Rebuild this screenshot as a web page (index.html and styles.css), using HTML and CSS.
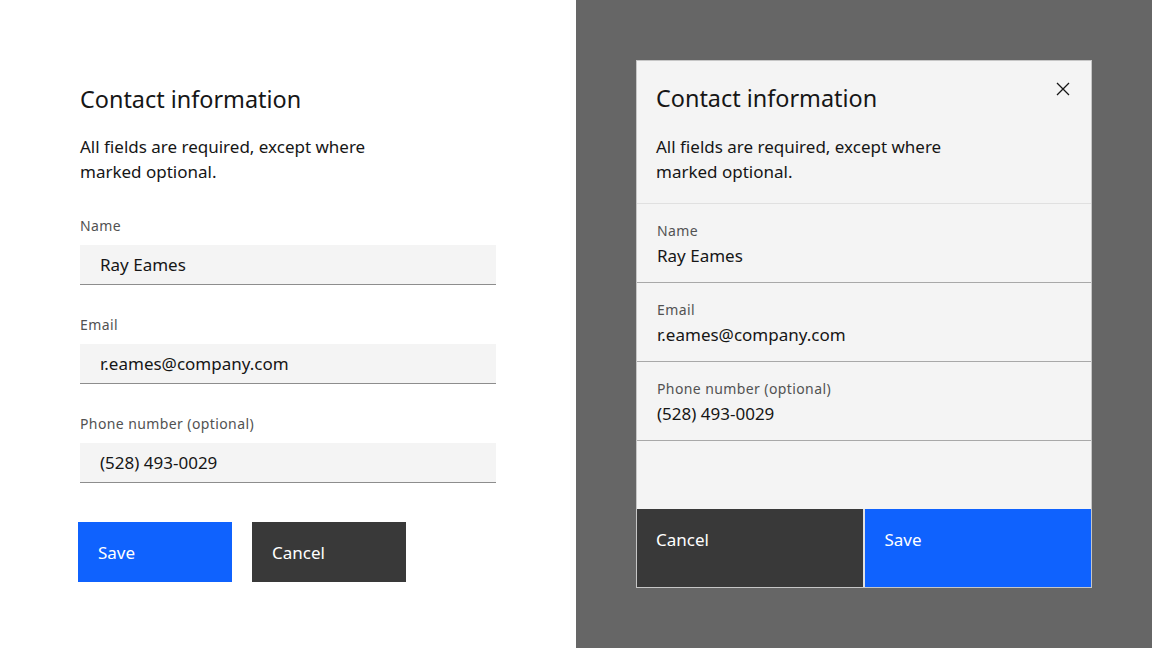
FILE: index.html
```html
<!DOCTYPE html>
<html>
<head>
  <title>Contact information</title>
  <link rel="stylesheet" href="styles.css">
</head>
<body>
  <div class="page">
    <div class="panel panel-light">
      <form class="form">
        <div class="heading">Contact information</div>
        <p class="description">All fields are required, except where<br>marked optional.</p>
        <div class="field">
          <label class="label">Name</label>
          <div class="input">Ray Eames</div>
        </div>
        <div class="field">
          <label class="label">Email</label>
          <div class="input">r.eames@company.com</div>
        </div>
        <div class="field">
          <label class="label">Phone number (optional)</label>
          <div class="input">(528) 493-0029</div>
        </div>
        <div class="actions">
          <button type="button" class="btn btn-primary">Save</button>
          <button type="button" class="btn btn-secondary">Cancel</button>
        </div>
      </form>
    </div>
    <div class="panel panel-dark">
      <div class="modal">
        <div class="modal-header">
          <div class="heading">Contact information</div>
          <p class="description">All fields are required, except where<br>marked optional.</p>
          <button type="button" class="close" aria-label="Close">
            <svg width="14" height="14" viewBox="0 0 14 14">
              <path d="M1 1 L13 13 M13 1 L1 13" stroke="#161616" stroke-width="1.3" fill="none"/>
            </svg>
          </button>
        </div>
        <div class="modal-field">
          <div class="label">Name</div>
          <div class="value">Ray Eames</div>
        </div>
        <div class="modal-field">
          <div class="label">Email</div>
          <div class="value">r.eames@company.com</div>
        </div>
        <div class="modal-field">
          <div class="label">Phone number (optional)</div>
          <div class="value">(528) 493-0029</div>
        </div>
        <div class="modal-spacer"></div>
        <div class="modal-footer">
          <button type="button" class="btn btn-secondary">Cancel</button>
          <button type="button" class="btn btn-primary">Save</button>
        </div>
      </div>
    </div>
  </div>
</body>
</html>
```

FILE: styles.css
```css
body {
  margin: 0;
  font-family: "Noto Sans", "Open Sans", sans-serif;
  color: #161616;
}
.page {
  display: flex;
  width: 1152px;
  height: 648px;
}
.panel {
  width: 576px;
  height: 648px;
  box-sizing: border-box;
}
.panel-light {
  background: #fff;
  padding: 83px 0 0 80px;
}
.panel-dark {
  background: #666666;
  padding: 60px 0 0 60px;
}
.heading {
  font-size: 23.4px;
  line-height: 32px;
  font-weight: 400;
}
.description {
  margin: 19px 0 0 0;
  font-size: 17px;
  line-height: 25px;
}
.form .description {
  margin-bottom: 33px;
}
.label {
  display: block;
  font-size: 14px;
  line-height: 18px;
  letter-spacing: 0.4px;
  color: #525252;
}
.field {
  margin-bottom: 31px;
}
.field .label {
  margin-bottom: 10px;
}
.input {
  width: 416px;
  height: 40px;
  box-sizing: border-box;
  background: #f4f4f4;
  border-bottom: 1px solid #8d8d8d;
  padding: 0 20px;
  font-size: 17px;
  line-height: 39px;
}
.actions {
  display: flex;
  gap: 20px;
  margin-top: 39px;
  margin-left: -2px;
}
.btn {
  font-family: inherit;
  font-size: 17px;
  color: #fff;
  border: none;
  text-align: left;
  cursor: pointer;
}
.actions .btn {
  width: 154px;
  height: 60px;
  padding: 0 20px;
}
.btn-primary {
  background-color: #0f62fe;
}
.btn-secondary {
  background-color: #393939;
}
.modal {
  position: relative;
  width: 456px;
  height: 528px;
  box-sizing: border-box;
  border: 1px solid #c6c6c6;
  background: #f4f4f4;
  display: flex;
  flex-direction: column;
}
.modal-header {
  padding: 21px 20px 19px 19px;
  border-bottom: 1px solid #e0e0e0;
}
.modal-header .description {
  margin-top: 20px;
}
.close {
  position: absolute;
  top: 21px;
  right: 21px;
  width: 14px;
  height: 14px;
  padding: 0;
  border: none;
  background: none;
  cursor: pointer;
}
.modal-field {
  padding: 18px 20px 14px 20px;
  border-bottom: 1px solid #a8a8a8;
}
.modal-field .value {
  margin-top: 4px;
  font-size: 17px;
  line-height: 24px;
}
.modal-spacer {
  flex: 1;
}
.modal-footer {
  display: flex;
  gap: 2px;
  background: #e0e0e0;
}
.modal-footer .btn {
  flex: 1;
  height: 78px;
  padding: 19px 19px 0 19px;
  line-height: 24px;
  display: flex;
  align-items: flex-start;
}
.modal-footer .btn-primary {
  padding-left: 20px;
}
```
